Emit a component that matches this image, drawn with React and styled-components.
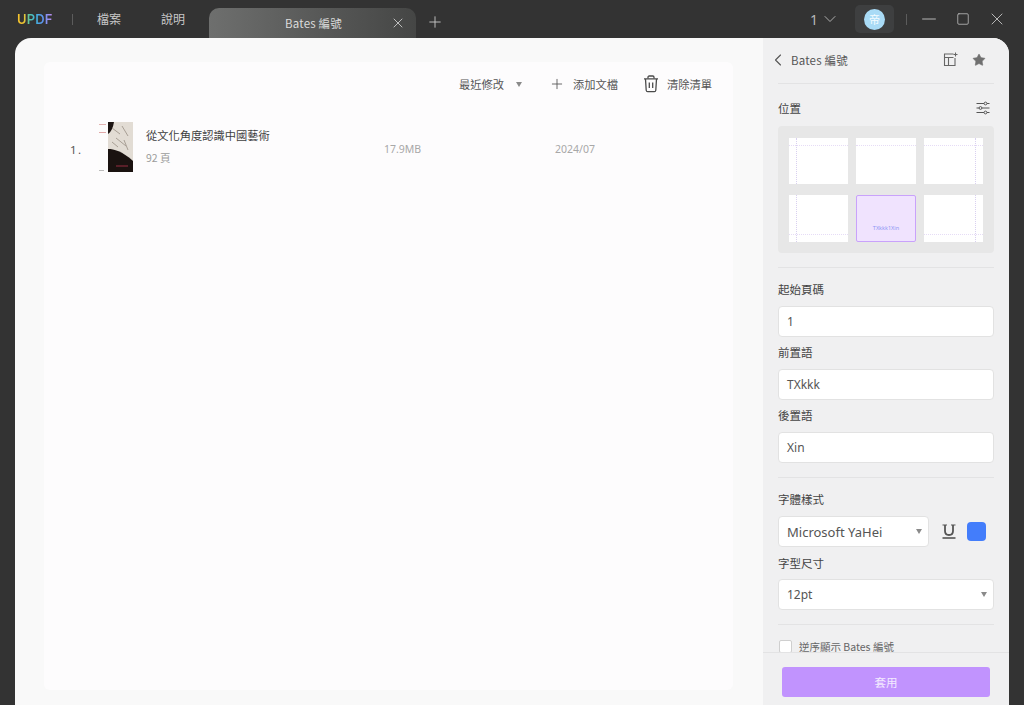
import React from 'react';
import styled, { createGlobalStyle } from 'styled-components';
import { Plus, X, Minus, ChevronDown, ChevronLeft, Star, Square } from 'lucide-react';

const GlobalStyle = createGlobalStyle`
  html, body {
    margin: 0;
    height: 100%;
    overflow: hidden;
    background: #333333;
    font-family: "Noto Sans CJK TC", "Noto Sans", sans-serif;
    color: #444;
  }
  * { box-sizing: border-box; }
`;

const Page = styled.div`
  width: 1024px;
  height: 705px;
  display: flex;
  flex-direction: column;
  background: #333333;
`;

const TitleBar = styled.div`
  height: 38px;
  flex: none;
  display: flex;
  align-items: stretch;
  padding-left: 17px;
  color: #cfcfcf;
`;

const Logo = styled.div`
  width: 36px;
  height: 14px;
  align-self: center;
  line-height: 14px;
  font-family: "Inter", "Liberation Sans", sans-serif;
  font-size: 13px;
  font-weight: 600;
  letter-spacing: 0.1px;
  color: transparent;
  background: linear-gradient(90deg, #f5c22b 0%, #eec531 20%, #58c6a4 33%, #3fb5d8 50%, #5e93f0 72%, #c98cf0 100%);
  -webkit-background-clip: text;
  background-clip: text;
`;

const BarDivider = styled.div`
  width: 1px;
  height: 11px;
  align-self: center;
  background: #5c5c5c;
  margin-left: ${(p) => p.$left}px;
  margin-right: ${(p) => p.$right || 0}px;
`;

const MenuItem = styled.div`
  font-size: 12px;
  line-height: 38px;
  margin-left: ${(p) => p.$left}px;
  color: #c8c8c8;
`;

const Tab = styled.div`
  width: 207px;
  margin: 8px 0 0 24px;
  height: 30px;
  border-radius: 10px 10px 0 0;
  background: linear-gradient(90deg, #6e6f6e 0%, #5b5c5b 45%, #454645 100%);
  display: flex;
  align-items: center;
  padding: 0 10px 0 76px;
  font-size: 11.5px;
  color: #dcdcdc;
  letter-spacing: 0.2px;
`;

const TabTitle = styled.span`
  flex: 1;
`;

const TabAdd = styled.div`
  display: flex;
  align-items: center;
  margin: 6px 0 0 10px;
  color: #c9c9c9;
`;

const BarRight = styled.div`
  margin-left: auto;
  display: flex;
  align-items: center;
  color: #b8b8b8;
`;

const AccountNum = styled.div`
  font-size: 14px;
  display: flex;
  align-items: center;
  gap: 2px;
  margin-right: 15px;
  font-family: "Noto Sans", sans-serif;
`;

const AvatarBox = styled.div`
  width: 39px;
  height: 28px;
  border-radius: 5px;
  background: #3e3f40;
  display: flex;
  align-items: center;
  justify-content: center;
`;

const Avatar = styled.div`
  width: 21px;
  height: 21px;
  border-radius: 50%;
  background: #a9dbf6;
  color: #f4fbff;
  font-size: 11px;
  display: flex;
  align-items: center;
  justify-content: center;
`;

const WindowButton = styled.div`
  width: ${(p) => p.$w}px;
  display: flex;
  justify-content: center;
  color: #c4c4c4;
  margin-right: ${(p) => p.$right || 0}px;
`;

const Window = styled.div`
  flex: 1;
  min-height: 0;
  margin: 0 15px;
  border-radius: 16px 16px 0 0;
  overflow: hidden;
  display: flex;
  background: #f9f9f9;
`;

const Main = styled.div`
  width: 748px;
  flex: none;
  padding: 24px 30px 15px 29px;
  display: flex;
`;

const ListPanel = styled.div`
  flex: 1;
  background: #fdfcfd;
  border-radius: 6px;
  display: flex;
  flex-direction: column;
`;

const ListToolbar = styled.div`
  height: 44px;
  display: flex;
  align-items: center;
  justify-content: flex-end;
  padding: 0 21px 0 0;
  font-size: 11.25px;
  color: #555;
`;

const ToolItem = styled.div`
  display: flex;
  align-items: center;
  gap: ${(p) => p.$gap || 8}px;
  margin-left: ${(p) => p.$left || 0}px;
`;

const SmallCaret = styled.span`
  width: 0;
  height: 0;
  border-left: 3.5px solid transparent;
  border-right: 3.5px solid transparent;
  border-top: 5px solid #8a8a8a;
  margin-left: ${(p) => p.$left || 0}px;
  flex: none;
`;

const BookRow = styled.div`
  display: grid;
  grid-template-columns: 28px 48px 238px 171px 1fr;
  align-items: center;
  height: 50px;
  margin-top: 16px;
  padding-left: 26px;
`;

const RowNum = styled.div`
  font-size: 11.5px;
  color: #555;
  letter-spacing: 1.5px;
  padding-top: 4px;
  font-family: "Noto Sans", sans-serif;
`;

const BookTitle = styled.div`
  font-size: 11.25px;
  line-height: 16px;
  color: #3f3f3f;
  margin-top: -2px;
`;

const BookPages = styled.div`
  font-size: 10.5px;
  line-height: 16px;
  margin-top: 7px;
  color: #9c9c9c;
`;

const RowMeta = styled.div`
  font-size: 10.5px;
  color: #a8a8a8;
  padding-top: 4px;
  font-family: "Noto Sans", sans-serif;
`;

const Side = styled.div`
  flex: 1;
  min-width: 0;
  background: #f0f0f1;
  display: flex;
  flex-direction: column;
`;

const SideScroll = styled.div`
  flex: 1;
  min-height: 0;
  overflow: hidden;
  padding: 0 15px;
`;

const SideHeader = styled.div`
  height: 46px;
  display: flex;
  align-items: center;
  padding-bottom: 2px;
  border-bottom: 1px solid #e3e3e4;
  font-size: 11.5px;
  color: #555;
  letter-spacing: 0.2px;
`;

const BackIcon = styled(ChevronLeft)`
  margin: 0 3px 0 -10px;
`;

const HeaderIcons = styled.div`
  margin-left: auto;
  display: flex;
  align-items: center;
  gap: 14px;
  padding-right: 8px;
  color: #707070;
`;

const PositionRow = styled.div`
  height: 42px;
  padding: 6px 4px 0 0;
  display: flex;
  align-items: center;
  justify-content: space-between;
  font-size: 11.5px;
  color: #444;
`;

const PositionGrid = styled.div`
  height: 127px;
  background: #e7e7e7;
  border-radius: 4px;
  padding: 12px 11px;
  display: grid;
  grid-template-columns: repeat(3, 1fr);
  grid-template-rows: 46px 47px;
  gap: 11px 8px;
`;

const Tile = styled.div`
  position: relative;
  overflow: hidden;
  background: ${(p) => (p.$active ? '#f0e3fe' : '#ffffff')};
  border: ${(p) => (p.$active ? '1px solid #c9a2fb' : 'none')};
  border-radius: ${(p) => (p.$active ? '2px' : '0')};
  display: flex;
  align-items: flex-end;
  justify-content: center;
`;

const GuideH = styled.div`
  position: absolute;
  left: 0;
  right: 0;
  border-top: 1px dotted #e6dcf6;
  ${(p) => (p.$bottom ? 'bottom: 7px;' : 'top: 7px;')}
`;

const GuideV = styled.div`
  position: absolute;
  top: 0;
  bottom: 0;
  border-left: 1px dotted #d9d0f0;
  ${(p) => (p.$right ? 'right: 7px;' : 'left: 7px;')}
`;

const TileText = styled.span`
  font-size: 5.5px;
  line-height: 8px;
  margin-bottom: 9px;
  color: #8f96f5;
  font-family: "Noto Sans", sans-serif;
`;

const Divider = styled.div`
  height: 1px;
  background: #e3e3e4;
  margin-top: ${(p) => p.$top}px;
`;

const FieldLabel = styled.div`
  height: 16px;
  line-height: 16px;
  font-size: 11.5px;
  color: #444;
  margin: ${(p) => p.$top}px 0 ${(p) => p.$bottom || 9}px;
`;

const Input = styled.div`
  height: 31px;
  background: #fff;
  border: 1px solid #e2e2e2;
  border-radius: 4px;
  padding: 0 8px;
  display: flex;
  align-items: center;
  font-size: 12px;
  color: #555;
  font-family: "Noto Sans", sans-serif;
`;

const SelectBox = styled(Input)`
  justify-content: space-between;
  padding-right: 6px;
  font-size: ${(p) => p.$size || 12}px;
  ${(p) => p.$width && `width: ${p.$width}px; flex: none;`}
`;

const FontRow = styled.div`
  display: flex;
  align-items: center;
`;

const UnderlineWrap = styled.div`
  margin-left: 13px;
  display: flex;
`;

const ColorSwatch = styled.div`
  width: 19px;
  height: 19px;
  margin-left: 11px;
  border-radius: 4px;
  background: #437dfb;
`;

const CheckRow = styled.div`
  display: flex;
  align-items: center;
  gap: 7px;
  margin: 14px 0 0 1px;
  font-size: 10.5px;
  color: #666;
`;

const CheckBox = styled.div`
  width: 13px;
  height: 13px;
  background: #fff;
  border: 1px solid #cfcfcf;
  border-radius: 2px;
`;

const SideFooter = styled.div`
  height: 53px;
  flex: none;
  border-top: 1px solid #e3e3e4;
  background: #f0f0f1;
  padding: 14px 19px 0;
`;

const ApplyButton = styled.div`
  height: 30px;
  border-radius: 3px;
  background: #c193fe;
  color: #f3eaff;
  font-size: 11.5px;
  display: flex;
  align-items: center;
  justify-content: center;
`;

function TrashIcon() {
  return (
    <svg width="16" height="18" viewBox="0 0 16 18" fill="none" stroke="#4a4a4a" strokeWidth="1.3">
      <path d="M1 3.8h14" />
      <path d="M5 3.5V2.2C5 1.5 5.5 1 6.2 1h3.6c.7 0 1.2.5 1.2 1.2v1.3" />
      <path d="M2.5 4l.7 11.2c.1.9.7 1.5 1.5 1.5h6.6c.8 0 1.4-.6 1.5-1.5L13.5 4" />
      <path d="M6.3 7.5v5.5M9.7 7.5v5.5" />
    </svg>
  );
}

function SlidersIcon() {
  return (
    <svg width="14" height="14" viewBox="0 0 14 14" fill="none" stroke="#555" strokeWidth="1">
      <path d="M0.5 2.5h7.5M11 2.5h2.5M0.5 7h2.5M6 7h7.5M0.5 11.5h7.5M11 11.5h2.5" />
      <circle cx="9.5" cy="2.5" r="1.4" />
      <circle cx="4.5" cy="7" r="1.4" />
      <circle cx="9.5" cy="11.5" r="1.4" />
    </svg>
  );
}

function AddPanelIcon() {
  return (
    <svg width="15" height="15" viewBox="0 0 15 15" fill="none" stroke="#666" strokeWidth="1.1">
      <path d="M10.5 2H1.5v11.5h10.5V6" />
      <path d="M1.5 5.5h9M5.5 5.5v8" />
      <path d="M12.5 0.5v4M10.5 2.5h4" />
    </svg>
  );
}

function UnderlineIcon() {
  return (
    <svg width="14" height="15" viewBox="0 0 14 15" fill="none" stroke="#555">
      <path d="M0.5 1h4.5M9 1h4.5" strokeWidth="1.2" />
      <path d="M3 1v6c0 2.6 1.6 4 4 4s4-1.400 4-4V1" strokeWidth="1.8" />
      <path d="M0.500 14h13" strokeWidth="1.6" />
    </svg>
  );
}

function BookCover() {
  return (
    <svg width="35" height="50" viewBox="0 0 35 50">
      <rect width="35" height="50" fill="#fdfcfc" />
      <rect x="1" y="2" width="7" height="1" fill="#e2b3b3" />
      <rect x="1" y="10" width="7" height="1" fill="#e0a8a8" />
      <rect x="1" y="48" width="5" height="1" fill="#bbb" />
      <rect x="10" width="25" height="50" fill="#e2dcd4" />
      <path d="M10 0h6c-1 6-3 10-6 12z" fill="#1c1412" />
      <path d="M10 27c6 0 14 2 25 12v11H10z" fill="#1a1210" />
      <path d="M14 6l8 6M24 4l6 10M18 16l10 8M26 18l4 10M14 20l6 5" stroke="#a89f95" strokeWidth="1" />
      <path d="M18 44h12" stroke="#6e2430" strokeWidth="1.5" />
    </svg>
  );
}

function PositionTile({ top, bottom, left, right }) {
  return (
    <Tile>
      {top && <GuideH />}
      {bottom && <GuideH $bottom />}
      {left && <GuideV />}
      {right && <GuideV $right />}
    </Tile>
  );
}

export default function App() {
  return (
    <Page>
      <GlobalStyle />
      <TitleBar>
        <Logo>UPDF</Logo>
        <BarDivider $left={19} />
        <MenuItem $left={24}>檔案</MenuItem>
        <MenuItem $left={40}>說明</MenuItem>
        <Tab>
          <TabTitle>Bates 編號</TabTitle>
          <X size={16} strokeWidth={1.2} />
        </Tab>
        <TabAdd><Plus size={18} strokeWidth={1.2} /></TabAdd>
        <BarRight>
          <AccountNum>1<ChevronDown size={20} strokeWidth={1.1} /></AccountNum>
          <AvatarBox><Avatar>帝</Avatar></AvatarBox>
          <BarDivider $left={12} $right={5} />
          <WindowButton $w={33}><Minus size={22} strokeWidth={1} /></WindowButton>
          <WindowButton $w={35}><Square size={14} strokeWidth={1.3} /></WindowButton>
          <WindowButton $w={33} $right={11}><X size={20} strokeWidth={1.1} /></WindowButton>
        </BarRight>
      </TitleBar>
      <Window>
        <Main>
          <ListPanel>
            <ListToolbar>
              <ToolItem $gap={4}>最近修改<SmallCaret $left={8} /></ToolItem>
              <ToolItem $left={27} $gap={8}><Plus size={16} strokeWidth={1.3} />添加文檔</ToolItem>
              <ToolItem $left={25} $gap={8}><TrashIcon />清除清單</ToolItem>
            </ListToolbar>
            <BookRow>
              <RowNum>1.</RowNum>
              <BookCover />
              <div>
                <BookTitle>從文化角度認識中國藝術</BookTitle>
                <BookPages>92 頁</BookPages>
              </div>
              <RowMeta>17.9MB</RowMeta>
              <RowMeta>2024/07</RowMeta>
            </BookRow>
          </ListPanel>
        </Main>
        <Side>
          <SideScroll>
            <SideHeader>
              <BackIcon size={20} strokeWidth={1.3} />
              Bates 編號
              <HeaderIcons>
                <AddPanelIcon />
                <Star size={14} fill="#707070" strokeWidth={1} />
              </HeaderIcons>
            </SideHeader>
            <PositionRow>位置<SlidersIcon /></PositionRow>
            <PositionGrid>
              <PositionTile top left />
              <PositionTile top />
              <PositionTile top right />
              <PositionTile bottom left />
              <Tile $active><TileText>TXkkk1Xin</TileText></Tile>
              <PositionTile bottom right />
            </PositionGrid>
            <Divider $top={14} />
            <FieldLabel $top={13}>起始頁碼</FieldLabel>
            <Input>1</Input>
            <FieldLabel $top={7}>前置語</FieldLabel>
            <Input>TXkkk</Input>
            <FieldLabel $top={7}>後置語</FieldLabel>
            <Input>Xin</Input>
            <Divider $top={14} />
            <FieldLabel $top={13}>字體樣式</FieldLabel>
            <FontRow>
              <SelectBox $width={151} $size={13}>Microsoft YaHei<SmallCaret /></SelectBox>
              <UnderlineWrap><UnderlineIcon /></UnderlineWrap>
              <ColorSwatch />
            </FontRow>
            <FieldLabel $top={8} $bottom={8}>字型尺寸</FieldLabel>
            <SelectBox>12pt<SmallCaret /></SelectBox>
            <Divider $top={14} />
            <CheckRow><CheckBox />逆序顯示 Bates 編號</CheckRow>
          </SideScroll>
          <SideFooter>
            <ApplyButton>套用</ApplyButton>
          </SideFooter>
        </Side>
      </Window>
    </Page>
  );
}
